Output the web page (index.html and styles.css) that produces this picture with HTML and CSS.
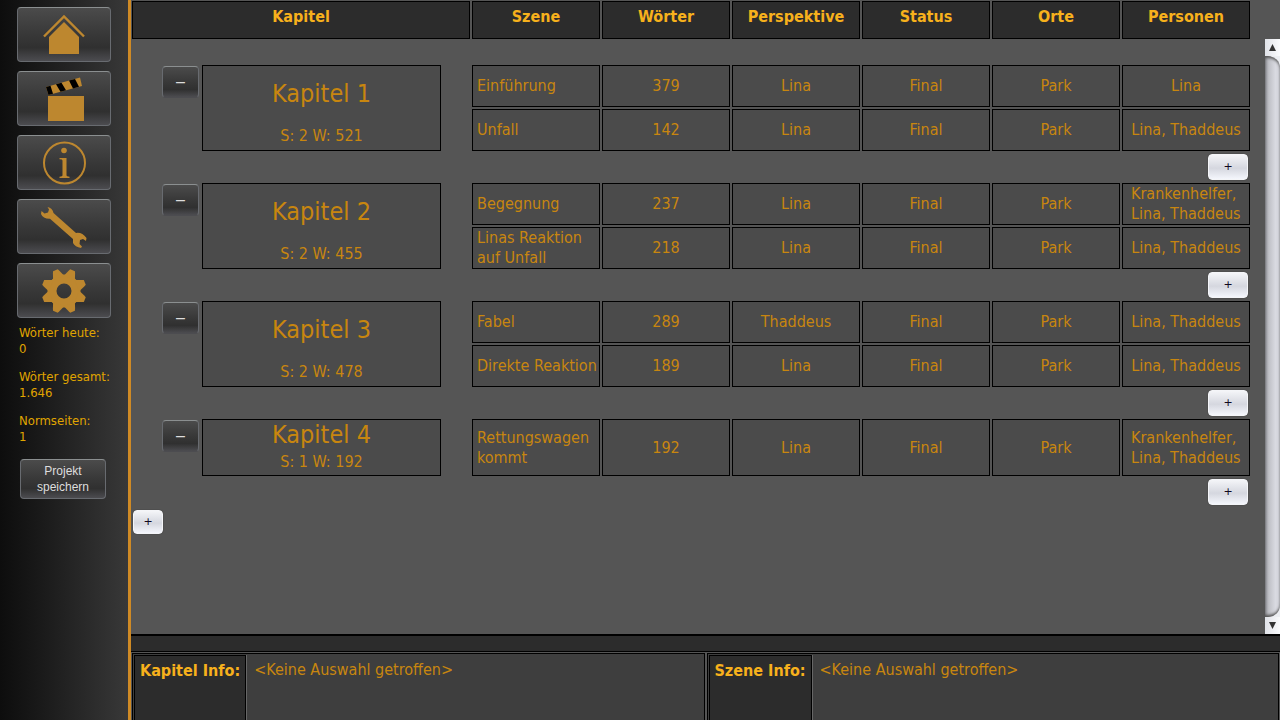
FILE: index.html
```html
<!doctype html>
<html lang="de">
<head>
	<meta charset="UTF-8">
	<title>Kapitel</title>
	<link rel="stylesheet" href="styles.css">
</head>
<body>

	<nav class="sidebar">
		<button type="button" class="dark nav_btn" aria-label="Start">
			<svg viewBox="0 0 48 48">
				<path d="M4 25.5L24 5.5L44 25.5" fill="none" stroke="#bd872f" stroke-width="2.4"/>
				<path d="M24 11L39 26V43H9V26Z" fill="#bd872f"/>
			</svg>
		</button>
		<button type="button" class="dark nav_btn" aria-label="Szenen">
			<svg viewBox="0 0 48 48">
				<path d="M8 21H44V46H8Z" fill="#bd872f"/>
				<path d="M6 12L40 2.500L42 11L8.500 20Z" fill="#bd872f"/>
				<path d="M6 12L10.500 10.700L13 18.800L8.500 20ZM16 9.200L21.500 7.700L26 15.300L20.500 16.800ZM29 5.600L35 3.900L39 11.800L33 13.400Z" fill="#000"/>
			</svg>
		</button>
		<button type="button" class="dark nav_btn" aria-label="Info">
			<svg viewBox="0 0 48 48">
				<circle cx="24.500" cy="24" r="20.500" fill="none" stroke="#bd872f" stroke-width="2"/>
				<circle cx="24" cy="11.500" r="2.800" fill="#bd872f"/>
				<path d="M19.500 19H26.500V36.500Q26.500 37.500 29.500 37.800V39H19.500V37.800Q22.500 37.500 22.500 36.500V21.500Q22.500 20.300 19.500 20.200Z" fill="#bd872f"/>
			</svg>
		</button>
		<button type="button" class="dark nav_btn" aria-label="Werkzeuge">
			<svg viewBox="0 0 48 48">
				<path d="M7.500 4Q12.500 5 13.500 10L36 30Q42 29 46.500 35L46 38L43 36L40 37L39.500 41L42 43.500L41 45Q35 44 33 40L33 36L10 15.800Q3 16 1 11L1.500 8L4.500 10.500L8 9.500L9 6.500Z" fill="#bd872f"/>
			</svg>
		</button>
		<button type="button" class="dark nav_btn" aria-label="Einstellungen">
			<svg viewBox="-24 -24 48 48" fill="#bd872f">
				<circle r="12" fill="none" stroke="#bd872f" stroke-width="9"/>
				<path id="tooth" d="M-6 -14L-3.500 -20.500L-2.500 -22.500H2.500L3.500 -20.500L6 -14Z" transform="rotate(22.500)"/>
				<use href="#tooth" transform="rotate(45)"/>
				<use href="#tooth" transform="rotate(90)"/>
				<use href="#tooth" transform="rotate(135)"/>
				<use href="#tooth" transform="rotate(180)"/>
				<use href="#tooth" transform="rotate(225)"/>
				<use href="#tooth" transform="rotate(270)"/>
				<use href="#tooth" transform="rotate(315)"/>
			</svg>
		</button>

		<div class="stats">
			<p>Wörter heute:<br>0</p>
			<p>Wörter gesamt:<br>1.646</p>
			<p>Normseiten:<br>1</p>
		</div>

		<button type="button" class="dark save">Projekt<br>speichern</button>
	</nav>

	<main class="main">
		<table class="grid head">
			<colgroup><col class="c_toggle"><col class="c_chapter"><col class="c_space"><col span="6"></colgroup>
			<thead>
				<tr>
					<th colspan="3">Kapitel</th>
					<th>Szene</th>
					<th>Wörter</th>
					<th>Perspektive</th>
					<th>Status</th>
					<th>Orte</th>
					<th>Personen</th>
				</tr>
			</thead>
		</table>

		<div class="content">
			<div class="scroll">
				<table class="grid list">
					<colgroup><col class="c_toggle"><col class="c_chapter"><col class="c_space"><col span="6"></colgroup>

					<!-- Kapitel 1 -->
					<tbody>
						<tr>
							<td class="toggle" rowspan="2"><button type="button" class="dark minus">–</button></td>
							<td class="chapter" rowspan="2"><h2>Kapitel 1</h2><p>S: 2 W: 521</p></td>
							<td class="space" rowspan="2"></td>
							<td class="scene">Einführung</td><td>379</td><td>Lina</td><td>Final</td><td>Park</td><td class="persons"><span>Lina</span></td>
						</tr>
						<tr>
							<td class="scene">Unfall</td><td>142</td><td>Lina</td><td>Final</td><td>Park</td><td class="persons"><span>Lina, Thaddeus</span></td>
						</tr>
						<tr>
							<td class="add" colspan="9"><button type="button" class="light">+</button></td>
						</tr>
					</tbody>

					<!-- Kapitel 2 -->
					<tbody>
						<tr>
							<td class="toggle" rowspan="2"><button type="button" class="dark minus">–</button></td>
							<td class="chapter" rowspan="2"><h2>Kapitel 2</h2><p>S: 2 W: 455</p></td>
							<td class="space" rowspan="2"></td>
							<td class="scene">Begegnung</td><td>237</td><td>Lina</td><td>Final</td><td>Park</td><td class="persons"><span>Krankenhelfer, Lina, Thaddeus</span></td>
						</tr>
						<tr>
							<td class="scene">Linas Reaktion auf Unfall</td><td>218</td><td>Lina</td><td>Final</td><td>Park</td><td class="persons"><span>Lina, Thaddeus</span></td>
						</tr>
						<tr>
							<td class="add" colspan="9"><button type="button" class="light">+</button></td>
						</tr>
					</tbody>

					<!-- Kapitel 3 -->
					<tbody>
						<tr>
							<td class="toggle" rowspan="2"><button type="button" class="dark minus">–</button></td>
							<td class="chapter" rowspan="2"><h2>Kapitel 3</h2><p>S: 2 W: 478</p></td>
							<td class="space" rowspan="2"></td>
							<td class="scene">Fabel</td><td>289</td><td>Thaddeus</td><td>Final</td><td>Park</td><td class="persons"><span>Lina, Thaddeus</span></td>
						</tr>
						<tr>
							<td class="scene">Direkte Reaktion</td><td>189</td><td>Lina</td><td>Final</td><td>Park</td><td class="persons"><span>Lina, Thaddeus</span></td>
						</tr>
						<tr>
							<td class="add" colspan="9"><button type="button" class="light">+</button></td>
						</tr>
					</tbody>

					<!-- Kapitel 4 -->
					<tbody>
						<tr>
							<td class="toggle"><button type="button" class="dark minus">–</button></td>
							<td class="chapter single"><h2>Kapitel 4</h2><p>S: 1 W: 192</p></td>
							<td class="space"></td>
							<td class="scene">Rettungswagen kommt</td><td>192</td><td>Lina</td><td>Final</td><td>Park</td><td class="persons"><span>Krankenhelfer, Lina, Thaddeus</span></td>
						</tr>
						<tr>
							<td class="add" colspan="9"><button type="button" class="light">+</button></td>
						</tr>
					</tbody>
				</table>
				<button type="button" class="light add_chapter">+</button>
			</div>

			<div class="scrollbar">
				<button type="button" aria-label="Nach oben"><svg viewBox="0 0 15 17"><path d="M4 12L7.500 5L11 12Z" fill="#333"/></svg></button>
				<div class="track"></div>
				<button type="button" aria-label="Nach unten"><svg viewBox="0 0 15 17"><path d="M4 5L7.500 12L11 5Z" fill="#333"/></svg></button>
			</div>
		</div>

		<div class="splitter"></div>

		<div class="infos">
			<section class="info">
				<h3>Kapitel Info:</h3>
				<p>&lt;Keine Auswahl getroffen&gt;</p>
			</section>
			<section class="info">
				<h3>Szene Info:</h3>
				<p>&lt;Keine Auswahl getroffen&gt;</p>
			</section>
		</div>
	</main>

</body>
</html>
```
FILE: styles.css
```css
* {
	box-sizing: border-box;
}

body,h2,h3,p {
	margin: 0;
	padding: 0;
	font-weight: normal;
}

body {
	display: flex;
	height: 100vh;
	overflow: hidden;
	background: #555;
	color: #c8860f;
	font-family: Tahoma, "DejaVu Sans Condensed", "Noto Sans", sans-serif;
	font-size: 16px;
	line-height: 20px;
}

button {
	display: block;
	padding: 0;
	cursor: pointer;
}

/* Buttons */
.dark {
	border: 1px solid #686b70;
	border-top-color: #8b8f90;
	border-radius: 4px;
	background: linear-gradient(#4b4b4b, #383838 50%, #303030 75%, #4c4c50);
	color: #ddd;
}

.light {
	width: 40px;
	height: 26px;
	border: 1px solid #f4f5f8;
	border-radius: 4px;
	background: linear-gradient(#f4f5f8, #d5d7df 55%, #f4f6fc);
	box-shadow: 0 0 1px #222;
	color: #100820;
	font-family: "DejaVu Sans", sans-serif;
	font-size: 11px;
	line-height: 20px;
}

/* Sidebar */
.sidebar {
	flex: none;
	width: 131px;
	padding: 7px 17px;
	border-right: 3px solid #cf8a25;
	background: linear-gradient(to right, #0d0d0d, #1b1b1b 35%, #383838);
}

.nav_btn {
	display: flex;
	align-items: center;
	justify-content: center;
	width: 94px;
	height: 55px;
	margin-bottom: 9px;
}

.nav_btn svg {
	width: 48px;
	height: 48px;
}

.stats {
	margin-top: -2px;
	padding: 0 2px;
	color: #e0a500;
	font-size: 13px;
	line-height: 16px;
	white-space: nowrap;
}

.stats p {
	margin-bottom: 12px;
}

.save {
	width: 86px;
	height: 40px;
	margin: 14px 3px;
	font-family: "Liberation Sans", Arial, sans-serif;
	font-size: 12px;
	line-height: 16px;
}

/* Main area */
.main {
	display: flex;
	flex: 1;
	flex-direction: column;
	min-width: 0;
}

.grid {
	flex: none;
	table-layout: fixed;
	border-collapse: separate;
	border-spacing: 2px;
	margin-left: -1px;
}

.grid th,
.grid td {
	padding: 0 4px;
	border: 1px solid #000;
	text-align: center;
}

.c_toggle {
	width: 68px;
}

.c_chapter {
	width: 239px;
}

.c_space {
	width: 27px;
}

.head {
	width: calc(100% - 27px);
	margin-top: -1px;
}

.head th {
	height: 38px;
	background: #2c2c2c;
	color: #f7b11c;
	line-height: 30px;
	vertical-align: top;
}

.content {
	display: flex;
	flex: 1;
	min-height: 0;
	margin-top: -2px;
}

.scroll {
	flex: 1;
	padding-top: 24px;
	overflow: hidden;
}

.list {
	width: calc(100% - 12px);
}

.list td {
	height: 42px;
	background: #4b4b4b;
}

.grid .scene {
	padding-right: 0;
	text-align: left;
}

.persons span {
	display: inline-block;
	text-align: left;
}

.grid .persons {
	padding: 0 8px;
}

.chapter h2 {
	font-size: 25px;
	line-height: 56px;
}

.chapter p {
	line-height: 28px;
}

.list .single {
	height: 57px;
}

.single h2 {
	line-height: 28px;
}

.single p {
	line-height: 26px;
}

.list .toggle,
.list .space,
.list .add {
	border: none;
	background: none;
}

.grid .toggle {
	padding: 1px 1px 0 0;
	vertical-align: top;
}

.minus {
	width: 37px;
	height: 32px;
	margin-left: auto;
	border-bottom-color: #4c4c50;
	font-family: "Liberation Sans", Arial, sans-serif;
	font-size: 16px;
}

.list .add {
	height: 28px;
	padding: 0 2px;
}

.add .light {
	margin-left: auto;
}

.add_chapter {
	width: 30px;
	height: 24px;
	margin: 2px;
}

/* Scrollbar */
.scrollbar {
	display: flex;
	flex-direction: column;
	width: 15px;
	background: #eceef2;
}

.scrollbar button {
	height: 17px;
	border: none;
	background: linear-gradient(to right, #e0e2e8, #fafbfd);
}

.scrollbar svg {
	display: block;
	width: 15px;
	height: 17px;
}

.track {
	flex: 1;
	border-radius: 0 12px 12px 0;
	background: linear-gradient(to right, #8c8d93, #bfc0c6 25%, #d9dae1 70%, #d0d1d8);
	box-shadow: inset 0 3px 3px -1px #555, inset 0 -3px 3px -1px #555;
}

/* Info panels */
.splitter {
	height: 18px;
	border-top: 2px solid #000;
	border-bottom: 1px solid #000;
	background: #2c2c2c;
}

.infos {
	display: flex;
	gap: 2px;
	height: 68px;
	padding: 1px 1px 0;
}

.info {
	display: flex;
	flex: 1;
	border: 1px solid #000;
	border-bottom: none;
	background: #3e3e3e;
}

.info h3 {
	margin: 1px 0 0 1px;
	padding: 5px;
	border: 1px solid #000;
	border-bottom: none;
	background: #2c2c2c;
	color: #f7b11c;
	font-size: 16px;
	font-weight: bold;
	box-shadow: 1px 0 #666;
}

.info p {
	padding: 6px 8px;
}
```
